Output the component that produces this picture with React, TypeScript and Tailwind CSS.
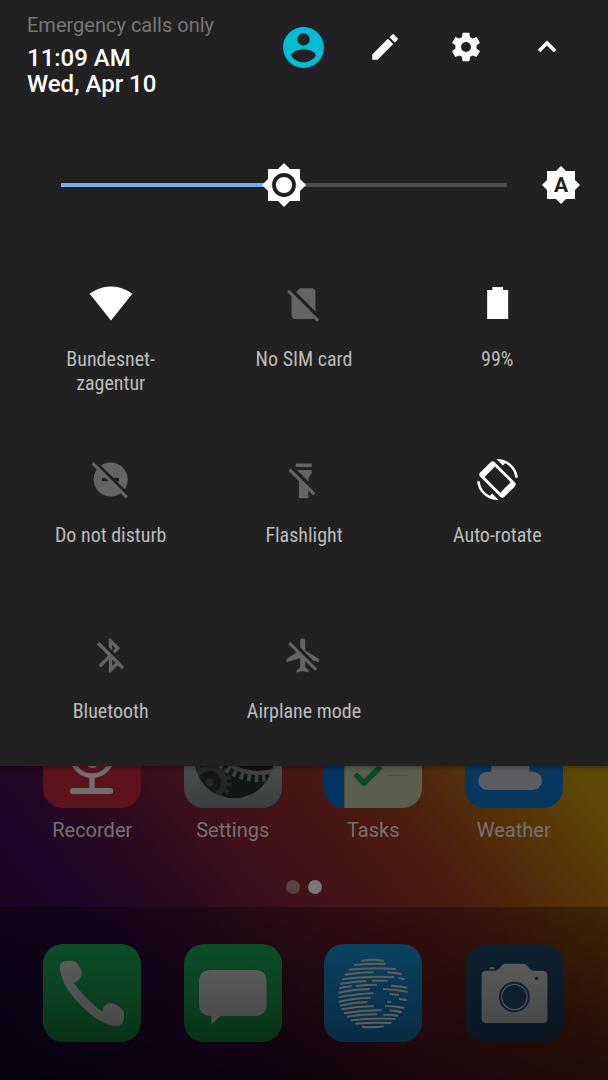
import { useState, type ReactNode } from "react";

const ICON_OFF = "text-[#646464]";
const ICON_ON = "text-white";

function Glyph({ size, children }: { size: string; children: ReactNode }) {
  return (
    <svg viewBox="0 0 24 24" className={size} fill="currentColor" aria-hidden="true">
      {children}
    </svg>
  );
}

function HeaderButton({ label, children }: { label: string; children: ReactNode }) {
  return (
    <button type="button" aria-label={label} className="flex h-[70px] w-[81px] items-center justify-center text-white">
      {children}
    </button>
  );
}

function Header() {
  return (
    <header className="flex items-start justify-between pt-3 pr-[21px] pl-[27px]">
      <div>
        <p className="text-[20px] leading-[26px] text-[#777777]">Emergency calls only</p>
        <div className="mt-[7px] text-[24px] leading-[26px] font-medium text-white">
          <p>11:09 AM</p>
          <p>Wed, Apr 10</p>
        </div>
      </div>
      <div className="flex">
        <HeaderButton label="User">
          <span className="text-[#00bcd4]">
            <Glyph size="size-[49px]">
              <path d="M12 2C6.48 2 2 6.48 2 12s4.48 10 10 10 10-4.48 10-10S17.52 2 12 2zm0 3c1.66 0 3 1.34 3 3s-1.34 3-3 3-3-1.34-3-3 1.34-3 3-3zm0 14.2c-2.5 0-4.71-1.28-6-3.22.03-1.99 4-3.08 6-3.08 1.99 0 5.97 1.09 6 3.08-1.29 1.94-3.5 3.22-6 3.22z" />
            </Glyph>
          </span>
        </HeaderButton>
        <HeaderButton label="Edit">
          <Glyph size="size-[34px]">
            <path d="M3 17.25V21h3.75L17.81 9.94l-3.75-3.75L3 17.25zM20.71 7.04c.39-.39.39-1.02 0-1.41l-2.34-2.34c-.39-.39-1.02-.39-1.41 0l-1.83 1.83 3.75 3.75 1.83-1.83z" />
          </Glyph>
        </HeaderButton>
        <HeaderButton label="Settings">
          <Glyph size="size-[34px]">
            <path d="M19.43 12.98c.04-.32.07-.64.07-.98s-.03-.66-.07-.98l2.11-1.65c.19-.15.24-.42.12-.64l-2-3.46c-.12-.22-.39-.3-.61-.22l-2.49 1c-.52-.4-1.08-.73-1.69-.98l-.38-2.65C14.46 2.18 14.25 2 14 2h-4c-.25 0-.46.18-.49.42l-.38 2.65c-.61.25-1.17.59-1.69.98l-2.49-1c-.23-.09-.49 0-.61.22l-2 3.46c-.13.22-.07.49.12.64l2.11 1.65c-.04.32-.07.65-.07.98s.03.66.07.98l-2.11 1.65c-.19.15-.24.42-.12.64l2 3.46c.12.22.39.3.61.22l2.49-1c.52.4 1.08.73 1.69.98l.38 2.65c.03.24.24.42.49.42h4c.25 0 .46-.18.49-.42l.38-2.65c.61-.25 1.17-.59 1.69-.98l2.49 1c.23.09.49 0 .61-.22l2-3.46c.12-.22.07-.49-.12-.64l-2.11-1.65zM12 15.5c-1.93 0-3.5-1.57-3.5-3.5s1.57-3.5 3.5-3.5 3.5 1.57 3.5 3.5-1.57 3.5-3.5 3.5z" />
          </Glyph>
        </HeaderButton>
        <HeaderButton label="Collapse">
          <Glyph size="size-[36px]">
            <path d="M12 7.6l-6.2 6.2 1.7 1.7L12 11l4.5 4.5 1.7-1.7z" />
          </Glyph>
        </HeaderButton>
      </div>
    </header>
  );
}

function Brightness() {
  const [level, setLevel] = useState(50);
  return (
    <div className="mt-[62px] flex h-[52px] items-center gap-[35px] pr-7 pl-[61px]">
      <div className="relative flex h-full flex-1 items-center">
        <div className="h-1 w-full bg-[#4f4f4f]">
          <div className="h-full bg-[#73adf8]" style={{ width: `${level}%` }} />
        </div>
        <svg
          viewBox="-22 -22 44 44"
          className="absolute top-1/2 size-11 -translate-x-1/2 -translate-y-1/2"
          style={{ left: `${level}%` }}
          aria-hidden="true"
        >
          <path d="M-16-16H16V16H-16zM0-22L22 0 0 22-22 0z" fill="#fff" />
          <circle r="10" fill="#fff" stroke="#212121" strokeWidth="3.8" />
        </svg>
        <input
          type="range"
          min={0}
          max={100}
          value={level}
          onChange={(e) => setLevel(Number(e.target.value))}
          aria-label="Display brightness"
          className="absolute inset-0 h-full w-full cursor-pointer opacity-0"
        />
      </div>
      <button type="button" aria-label="Automatic brightness" className="size-[38px]">
        <svg viewBox="-19 -19 38 38" className="size-full">
          <path d="M-14-14H14V14H-14zM0-19L19 0 0 19-19 0z" fill="#fff" />
          <text y="7" textAnchor="middle" className="text-[21px] font-bold" fill="#212121">
            A
          </text>
        </svg>
      </button>
    </div>
  );
}

const tiles: { label: string; lines?: string[]; on: boolean; size: string; art: ReactNode }[] = [
  {
    label: "Wi-Fi",
    lines: ["Bundesnet-", "zagentur"],
    on: true,
    size: "size-11",
    art: <path d="M12.01 21.49L23.64 7c-.45-.34-4.93-4-11.64-4C5.28 3 .81 6.66.36 7l11.63 14.49.01.01.01-.01z" />,
  },
  {
    label: "No SIM card",
    on: false,
    size: "size-[41px]",
    art: (
      <path d="M18.99 5c0-1.1-.89-2-1.99-2h-7L7.66 5.34 19 16.68 18.99 5zM3.65 3.88L2.38 5.15 5 7.77V19c0 1.1.9 2 2 2h10.01c.35 0 .67-.1.96-.26l1.88 1.88 1.27-1.27L3.65 3.88z" />
    ),
  },
  { label: "99%", on: true, size: "size-10", art: <path d="M6.1 4.2H9.2V2.4h6.4v1.8h3.1v17.4H6.1z" /> },
  {
    label: "Do not disturb",
    on: false,
    size: "size-[41px]",
    art: (
      <>
        <defs>
          <mask id="dnd">
            <path d="M0 0H24V24H0z" fill="#fff" />
            <path d="M7 11H17V13H7z" fill="#000" />
            <path d="M0-1.4L24 22.6" stroke="#000" strokeWidth="1.8" />
          </mask>
        </defs>
        <circle cx="12.1" cy="12" r="10" mask="url(#dnd)" />
        <path d="M1.6 2.5L21.6 22.5" stroke="currentColor" strokeWidth="1.8" />
      </>
    ),
  },
  {
    label: "Flashlight",
    on: false,
    size: "size-[41px]",
    art: (
      <>
        <path d="M7.4 2.7h9.4v2H7.4zM8.2 6.4h8.6v1.8L15 11v2.3z" />
        <path d="M4.5 5.6L3.2 6.9 9.3 13v10h5.5v-4.6l2.9 2.9L19 20z" />
      </>
    ),
  },
  {
    label: "Auto-rotate",
    on: true,
    size: "size-[41px]",
    art: (
      <>
        <path d="M16.48 2.52c3.27 1.55 5.61 4.72 5.97 8.48h1.5C23.44 4.84 18.29 0 12 0l-.66.03 3.81 3.81 1.33-1.32zM7.52 21.48C4.25 19.94 1.91 16.76 1.55 13H.05C.56 19.16 5.71 24 12 24l.66-.03-3.81-3.81-1.33 1.32z" />
        <path
          fillRule="evenodd"
          d="M10.23 1.75c-.59-.59-1.54-.59-2.12 0L1.75 8.11c-.59.59-.59 1.54 0 2.12l12.02 12.02c.59.59 1.54.59 2.12 0l6.36-6.36c.59-.59.59-1.54 0-2.12zM10.5 4.4L4.4 10.5 13.6 19.7 19.7 13.6z"
        />
      </>
    ),
  },
  {
    label: "Bluetooth",
    on: false,
    size: "size-[41px]",
    art: (
      <path d="M13 5.83l1.88 1.88-1.6 1.6 1.41 1.41 3.02-3.02L12 2h-1v5.03l2 2v-3.2zM5.41 4L4 5.41 10.59 12 5 17.59 6.41 19 11 14.41V22h1l4.29-4.29 2.3 2.29L20 18.59 5.41 4zM13 18.17v-3.76l1.88 1.88L13 18.17z" />
    ),
  },
  {
    label: "Airplane mode",
    on: false,
    size: "size-[41px]",
    art: (
      <path d="M13 9V3.5c0-.83-.67-1.5-1.5-1.5S10 2.67 10 3.5v3.68l7.83 7.83L21 16v-2l-8-5zM3 5.27l4.99 4.99L2 14v2l8-2.5V19l-2 1.5V22l3.5-1 3.5 1v-1.5L13 19v-3.73L18.73 21 20 19.73 4.27 4 3 5.27z" />
    ),
  },
];

function Tiles() {
  return (
    <div className="mt-[70px] grid grid-cols-3 gap-y-[62px] px-3.5">
      {tiles.map((tile) => (
        <button
          key={tile.label}
          type="button"
          aria-pressed={tile.on}
          className="flex min-h-[114px] flex-col items-center justify-start"
        >
          <span className={`flex h-11 items-center ${tile.on ? ICON_ON : ICON_OFF}`}>
            <Glyph size={tile.size}>{tile.art}</Glyph>
          </span>
          <span className="mt-[22px] font-['Roboto_Condensed','Liberation_Sans_Narrow',Roboto,sans-serif] text-[20px] leading-6 text-[#bcbcbc]">
            {(tile.lines ?? [tile.label]).map((line) => (
              <span key={line} className="block">
                {line}
              </span>
            ))}
          </span>
        </button>
      ))}
    </div>
  );
}

const apps: { name: string; viewBox: string; art: ReactNode }[] = [
  {
    name: "Recorder",
    viewBox: "129 33 294 126",
    art: (
      <>
        <rect x="129" y="-135" width="294" height="294" rx="60" fill="#5c131b" />
        <rect x="256" y="-100" width="42" height="139" rx="20" fill="#707070" />
        <circle cx="276" cy="2" r="60" fill="none" stroke="#707070" strokeWidth="14" />
        <path d="M276 66V108" stroke="#707070" strokeWidth="16" />
        <path d="M219 108H331" stroke="#707070" strokeWidth="18" strokeLinecap="round" />
      </>
    ),
  },
  {
    name: "Settings",
    viewBox: "551 33 294 126",
    art: (
      <>
        <defs>
          <clipPath id="gears">
            <circle cx="701" cy="11" r="119" />
          </clipPath>
          <linearGradient id="plate" x1="0" y1="0" x2="0" y2="1">
            <stop offset="0.5" stopColor="#4b5050" />
            <stop offset="1" stopColor="#3a3e3e" />
          </linearGradient>
        </defs>
        <rect x="551" y="-135" width="294" height="294" rx="60" fill="url(#plate)" />
        <g clipPath="url(#gears)">
          <circle cx="701" cy="11" r="119" fill="#131616" />
          <circle cx="628" cy="82" r="52" fill="#262828" />
          <circle cx="628" cy="82" r="58" fill="none" stroke="#262828" strokeWidth="16" strokeDasharray="11.5 11.3" />
          <circle cx="628" cy="82" r="34" fill="#131616" />
          <circle cx="628" cy="82" r="12" fill="#262828" />
          <circle cx="774" cy="-102" r="150" fill="#181018" />
          <circle cx="774" cy="-102" r="156" fill="none" stroke="#3d4242" strokeWidth="13" />
          <circle cx="774" cy="-102" r="172" fill="none" stroke="#3d4242" strokeWidth="22" strokeDasharray="10.5 12" />
        </g>
      </>
    ),
  },
  {
    name: "Tasks",
    viewBox: "61 33 294 126",
    art: (
      <>
        <defs>
          <clipPath id="notebook">
            <rect x="61" y="-135" width="294" height="294" rx="60" />
          </clipPath>
        </defs>
        <g clipPath="url(#notebook)">
          <path d="M61 0H122V160H61z" fill="#003460" />
          <path d="M122 0H356V160H122z" fill="#5b5d4d" />
          <path d="M160 63L181 84 226 40" fill="none" stroke="#084d22" strokeWidth="17" strokeLinecap="round" strokeLinejoin="round" />
          <path d="M252 61H311" stroke="#4a4a4c" strokeWidth="3" />
        </g>
      </>
    ),
  },
  {
    name: "Weather",
    viewBox: "483 33 294 126",
    art: (
      <>
        <rect x="483" y="-135" width="294" height="294" rx="60" fill="#083760" />
        <rect x="523" y="50" width="191" height="55" rx="27" fill="#5c5d61" />
        <path d="M562 20H676V60H562z" fill="#5c5d61" />
      </>
    ),
  },
];

const dock: { name: string; viewBox: string; art: ReactNode }[] = [
  {
    name: "Phone",
    viewBox: "129 132 294 294",
    art: (
      <>
        <defs>
          <linearGradient id="leaf" x1="0" y1="0" x2="0" y2="1">
            <stop offset="0" stopColor="#0c4d26" />
            <stop offset="0.45" stopColor="#0b4322" />
            <stop offset="1" stopColor="#083215" />
          </linearGradient>
          <linearGradient id="chrome" x1="0" y1="0" x2="0" y2="1">
            <stop offset="0" stopColor="#5a5a5a" />
            <stop offset="1" stopColor="#47494a" />
          </linearGradient>
        </defs>
        <rect x="129" y="132" width="294" height="294" rx="60" fill="url(#leaf)" />
        <path
          d="M179 205Q179 183 200 183H218Q228 183 233 191L243 209Q248 219 242 231Q236 245 221 248Q256 297 307 336Q308 320 320 313Q332 306 344 312L363 324Q372 330 372 340V355Q370 378 348 378Q310 377 258 331Q184 262 179 205z"
          fill="url(#chrome)"
        />
      </>
    ),
  },
  {
    name: "Messages",
    viewBox: "551 132 294 294",
    art: (
      <>
        <rect x="551" y="132" width="294" height="294" rx="60" fill="url(#leaf)" />
        <path
          d="M632 210H763Q799 210 799 246V312Q799 348 763 348H660L633 374V348Q596 348 596 312V246Q596 210 632 210z"
          fill="url(#chrome)"
        />
      </>
    ),
  },
  {
    name: "Browser",
    viewBox: "61 132 294 294",
    art: (
      <>
        <defs>
          <linearGradient id="sea" x1="0" y1="0" x2="0" y2="1">
            <stop offset="0" stopColor="#0b4260" />
            <stop offset="1" stopColor="#082c44" />
          </linearGradient>
        </defs>
        <rect x="61" y="132" width="294" height="294" rx="60" fill="url(#sea)" />
        <path
          d="M174 182Q208 176 240 182M151 195Q200 189 245 192M135 209Q200 201 277 207M124 224Q165 217 211 217M250 217Q275 218 294 223M115 238Q190 226 271 232M285 234L302 238M110 252Q148 244 188 243M205 242H252M107 265Q125 261 144 259M157 258Q190 254 220 254M262 257Q290 258 311 263M105 278Q150 268 198 267M238 267Q280 269 312 276M105 292Q160 281 210 280M257 281L286 285M106 305Q150 294 200 293M286 296L310 301M109 317Q150 307 191 306M251 306H262M113 328Q160 319 210 318M244 318Q275 318 302 324M121 340Q180 330 234 331M257 331Q276 332 294 337M130 350Q175 343 221 343M239 344Q262 344 284 347M141 361Q210 353 275 357M155 371Q208 366 263 369M175 380Q208 384 240 379"
          fill="none"
          stroke="#5c5d5e"
          strokeWidth="6"
        />
      </>
    ),
  },
  {
    name: "Camera",
    viewBox: "485 132 294 294",
    art: (
      <>
        <defs>
          <linearGradient id="night" x1="0" y1="0" x2="0" y2="1">
            <stop offset="0" stopColor="#0e1f2e" />
            <stop offset="1" stopColor="#0a1722" />
          </linearGradient>
        </defs>
        <rect x="487" y="133" width="292" height="293" rx="60" fill="url(#night)" />
        <path
          d="M549 212H575Q583 211 590 203L597 195Q601 191 608 191H660Q666 191 670 196L677 204Q684 212 691 212H718Q732 212 732 226V356Q732 369 718 369H549Q535 369 535 356V226Q535 212 549 212zM558 207Q558 201 563 201H569Q574 202 574 207z"
          fill="url(#chrome)"
        />
        <circle cx="633" cy="291" r="46" fill="#0e1f2e" />
        <circle cx="633" cy="291" r="38" fill="none" stroke="#525354" strokeWidth="4" />
        <circle cx="700" cy="235" r="5" fill="#0e1f2e" />
      </>
    ),
  },
];

export default function App() {
  return (
    <div className="flex min-h-screen flex-col bg-black font-[Roboto,'Liberation_Sans',sans-serif]">
      <section className="relative bg-[#212121] pb-[19px] shadow-[0_1px_5px_rgba(0,0,0,0.4)]">
        <Header />
        <Brightness />
        <Tiles />
      </section>
      <main className="flex flex-1 flex-col bg-[linear-gradient(50deg,#0e0222_4%,#1b0424_17%,#200528_28%,#290a20_37%,#40111a_52%,#461612_62%,#4c1c10_71%,#553309_84%,#5e4806_96%)]">
        <nav aria-label="Apps" className="grid grid-cols-4 pr-6 pl-[22px]">
          {apps.map((app) => (
            <button key={app.name} type="button" className="flex flex-col items-center">
              <svg viewBox={app.viewBox} className="w-[98px]" aria-hidden="true">
                {app.art}
              </svg>
              <span className="mt-2.5 text-[20px] leading-6 text-[#777270]">{app.name}</span>
            </button>
          ))}
        </nav>
        <div className="mt-[38px] mb-[13px] flex justify-center gap-2">
          <span className="size-3.5 rounded-full bg-[#5a4045]" />
          <span className="size-3.5 rounded-full bg-[#7b7776]" />
        </div>
        <nav
          aria-label="Dock"
          className="grid flex-1 grid-cols-4 items-start bg-linear-to-b from-black/30 to-black/55 pt-[37px] pr-6 pb-9 pl-[22px]"
        >
          {dock.map((app) => (
            <button key={app.name} type="button" aria-label={app.name} className="flex justify-center">
              <svg viewBox={app.viewBox} className="w-[98px]" aria-hidden="true">
                {app.art}
              </svg>
            </button>
          ))}
        </nav>
      </main>
    </div>
  );
}
